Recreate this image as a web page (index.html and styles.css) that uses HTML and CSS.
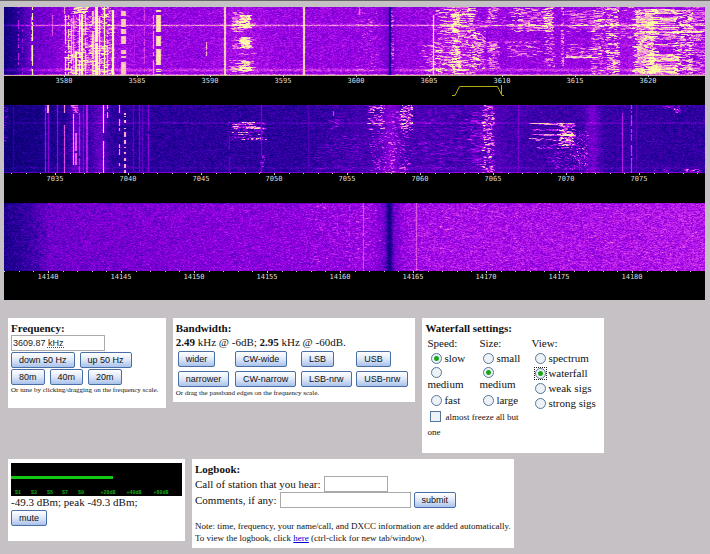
FILE: index.html
```html
<!DOCTYPE html>
<html lang="en">
<head>
<meta charset="utf-8">
<title>WebSDR</title>
<link rel="stylesheet" href="styles.css">
</head>
<body>
<main class="page">
  <section class="bands" aria-label="Waterfalls">
    <div class="band">
      <canvas class="waterfall" width="701" height="68" data-band="80m"></canvas>
      <svg class="scale" viewBox="0 0 701 30" data-start="3580" data-x="60" data-count="9">
        <path class="edge" d="M0 0.5H701"/>
        <path class="passband" d="M448 20.5H451L455.500 11.500H493.500L498 20.500H500M497.500 10V20"/>
      </svg>
    </div>
    <div class="band">
      <canvas class="waterfall" width="701" height="68" data-band="40m"></canvas>
      <svg class="scale" viewBox="0 0 701 30" data-start="7035" data-x="51" data-count="9"></svg>
    </div>
    <div class="band">
      <canvas class="waterfall" width="701" height="68" data-band="20m"></canvas>
      <svg class="scale" viewBox="0 0 701 29" data-start="14140" data-x="44" data-count="9"></svg>
    </div>
  </section>

  <div class="row row-controls">
    <section class="panel frequency">
      <h2><label for="freq">Frequency:</label></h2>
      <div class="freq-field"><input id="freq" class="field" type="text" value="3609.87 kHz" spellcheck="false"></div>
      <div class="buttons">
        <button type="button">down 50 Hz</button>
        <button type="button">up 50 Hz</button>
      </div>
      <div class="buttons">
        <button type="button">80m</button>
        <button type="button">40m</button>
        <button type="button">20m</button>
      </div>
      <p class="tiny">Or tune by clicking/dragging on the frequency scale.</p>
    </section>

    <section class="panel bandwidth">
      <h2>Bandwidth:</h2>
      <p><b>2.49</b> kHz @ -6dB; <b>2.95</b> kHz @ -60dB.</p>
      <div class="modes">
        <button type="button">wider</button>
        <button type="button">CW-wide</button>
        <button type="button">LSB</button>
        <button type="button">USB</button>
        <button type="button">narrower</button>
        <button type="button">CW-narrow</button>
        <button type="button">LSB-nrw</button>
        <button type="button">USB-nrw</button>
      </div>
      <p class="tiny">Or drag the passband edges on the frequency scale.</p>
    </section>

    <section class="panel settings">
      <h2>Waterfall settings:</h2>
      <div class="options">
        <div class="narrow-options">
          <div class="option-list" role="radiogroup" aria-label="Speed">
            <p>Speed:</p>
            <label><input type="radio" name="speed" checked>slow</label>
            <label class="wrapped"><input type="radio" name="speed"><span>medium</span></label>
            <label><input type="radio" name="speed">fast</label>
          </div>
          <div class="option-list" role="radiogroup" aria-label="Size">
            <p>Size:</p>
            <label><input type="radio" name="size">small</label>
            <label class="wrapped"><input type="radio" name="size" checked><span>medium</span></label>
            <label><input type="radio" name="size">large</label>
          </div>
          <label class="freeze"><input type="checkbox">almost freeze all but one</label>
        </div>
        <div class="option-list" role="radiogroup" aria-label="View">
          <p>View:</p>
          <label><input type="radio" name="view">spectrum</label>
          <label><span class="focused"><input type="radio" name="view" checked></span>waterfall</label>
          <label><input type="radio" name="view">weak sigs</label>
          <label><input type="radio" name="view">strong sigs</label>
        </div>
      </div>
    </section>
  </div>

  <div class="row row-log">
    <section class="panel meter">
      <svg class="smeter" viewBox="0 0 171 33">
        <rect width="171" height="33" fill="#000"/>
        <rect y="13" width="102" height="3" fill="#12c812"/>
        <g class="smeter-labels">
          <text x="7" y="31">S1</text><text x="23" y="31">S3</text><text x="39" y="31">S5</text>
          <text x="54" y="31">S7</text><text x="70" y="31">S9</text><text x="97" y="31">+20dB</text>
          <text x="123" y="31">+40dB</text><text x="150" y="31">+60dB</text>
        </g>
      </svg>
      <p>-49.3 dBm; peak -49.3 dBm;</p>
      <div class="buttons"><button type="button">mute</button></div>
    </section>

    <section class="panel logbook">
      <h2>Logbook:</h2>
      <div class="log-line"><label for="call">Call of station that you hear:</label><input id="call" class="field call" type="text"></div>
      <div class="log-line"><label for="comments">Comments, if any:</label><input id="comments" class="field comments" type="text"><button type="submit">submit</button></div>
      <p class="note">Note: time, frequency, your name/call, and DXCC information are added automatically.<br>To view the logbook, click <a href="#log">here</a> (ctrl-click for new tab/window).</p>
    </section>
  </div>
</main>
<script src="waterfall.js"></script>
</body>
</html>
```
FILE: styles.css
```css
* { box-sizing: border-box; }

body {
  margin: 0;
  background: #c5c1c5;
  color: #111;
  font: 11px/15px "Liberation Serif", serif;
}

.page {
  border-top: 1px solid #666;
  padding: 6px 5px 6px 4px;
}

h2, p { margin: 0; font-size: 11px; }

/* Waterfalls */
.bands { background: #000; }
.band, .waterfall, .scale { display: block; width: 100%; }
.scale { height: auto; }
.scale path { fill: none; stroke: #ccc; }
.scale .edge { stroke: #c8b49a; }
.scale .passband { stroke: #b4ac10; }
.scale text {
  fill: #ddd;
  font: 7px "DejaVu Sans Mono", monospace;
  text-anchor: middle;
}

/* Panels */
.row {
  display: grid;
  align-items: start;
  column-gap: 7px;
  padding-left: 4px;
}
.row-controls { grid-template-columns: 158fr 243fr 182fr 94fr; margin-top: 18px; }
.row-log { grid-template-columns: 177fr 322fr 184fr; margin-top: 6px; }
.panel { background: #fff; padding: 3px 3px 4px; white-space: nowrap; }
.panel h2 { line-height: 14px; }
.frequency { padding-bottom: 12px; }
.panel .tiny { font-size: 7px; line-height: 11px; }
.bandwidth .tiny { padding-top: 1px; }
.bandwidth { padding-bottom: 3px; }

button {
  height: 16px;
  padding: 0 7px;
  border: 1px solid #4a6fa5;
  border-radius: 2px;
  background: linear-gradient(#fff, #dfe8f8 50%, #a9c1ec);
  color: #111;
  font: 9px/14px "Liberation Sans", sans-serif;
}
.buttons { display: flex; gap: 5px; margin-top: 1px; }

.field {
  height: 16px;
  padding: 0 1px;
  border: 1px solid #aaa;
  background: #fff;
  color: #222;
  font: 9px/14px "Liberation Sans", sans-serif;
}
.freq-field { position: relative; display: flex; }
.freq-field .field { width: 94px; }
.freq-field::after {
  content: "";
  position: absolute;
  left: 36px;
  top: 12px;
  width: 17px;
  border-bottom: 1px dotted #f00;
}

.modes {
  display: grid;
  grid-template-columns: 57fr 66fr 55fr 56fr;
  justify-items: start;
  row-gap: 4px;
  padding: 1px 0 0 2px;
}

/* Settings */
.settings { padding-bottom: 14px; }
.options { display: flex; padding: 1px 2px 0; }
.narrow-options { display: grid; grid-template-columns: 52px 52px; }
.option-list label { display: flex; align-items: center; gap: 1px; padding-left: 3px; }
.option-list .wrapped { display: block; height: 26px; line-height: 11px; }
.wrapped input { display: block; }
.wrapped span { display: block; margin-left: -3px; }
.freeze {
  grid-column: 1 / 3;
  padding: 2px 3px 0 0;
  font-size: 9px;
  line-height: 14px;
  white-space: normal;
}
input[type="radio"], input[type="checkbox"] {
  appearance: none;
  width: 11px;
  height: 11px;
  margin: 1px;
  border: 1px solid #54789c;
  background: #eef2f6;
  vertical-align: middle;
}
input[type="radio"] { border-radius: 50%; }
input[type="radio"]:checked { background: radial-gradient(circle, #1ba51b 2px, #eef2f6 3px); }
input[type="checkbox"] { margin: 1px 4px 3px 3px; }
.focused { display: flex; outline: 1px dotted #222; outline-offset: -1px; }

/* Meter and logbook */
.meter { padding: 4px 3px 15px; }
.smeter { display: block; width: 100%; height: auto; }
.smeter-labels { fill: #14b014; font: bold 5px "Liberation Mono", monospace; text-anchor: middle; }
.meter p { line-height: 13px; }
.log-line { display: flex; align-items: center; gap: 3px; height: 16px; }
.call { width: 64px; }
.comments { width: 131px; }
.note { margin-top: 12px; font-size: 9px; line-height: 12px; }
a { color: #00d; }
```
FILE: waterfall.js
```js
var seed = 12345;
function rnd() {
  seed = (seed * 1664525 + 1013904223) >>> 0;
  return seed / 4294967296;
}

// Signal level (0..1) to colour.
var stops = [
  [0, 0, 0, 95], [0.2, 32, 0, 150], [0.35, 88, 0, 190], [0.5, 150, 0, 228],
  [0.65, 208, 50, 236], [0.8, 238, 150, 210], [0.92, 252, 232, 165], [1, 255, 252, 165]
];
function colour(v) {
  v = Math.max(0, Math.min(1, v));
  for (var i = 1; i < stops.length; i++) {
    if (v <= stops[i][0]) {
      var a = stops[i - 1], b = stops[i], t = (v - a[0]) / (b[0] - a[0]);
      return [a[1] + (b[1] - a[1]) * t, a[2] + (b[2] - a[2]) * t, a[3] + (b[3] - a[3]) * t];
    }
  }
}

// line:  x, width, level, y0, y1, dash share
// blob:  x0, x1, y0, y1, level gain, density, streak length
// glow:  centre, sigma, gain
var bands = {
  "80m": {
    noise: 0.15,
    base: [[0, 0.1], [12, 0.2], [25, 0.38], [60, 0.46], [120, 0.5], [701, 0.5]],
    glows: [[385, 5, -0.08], [241, 18, 0.04], [451, 16, 0.06], [640, 25, 0.05], [90, 22, 0.06]],
    rows: [[17, 0.1], [18, 0.3], [19, 0.06], [61, 0.06], [62, 0.13], [63, 0.16], [64, 0.07], [67, 0.22]],
    blobs: [
      [60, 112, 8, 67, 0.25, 0.5, 3], [67, 85, 0, 7, 0.55, 0.98, 5], [60, 112, 38, 67, 0.25, 0.35, 8],
      [97, 108, 0, 10, 0.35, 0.5, 3], [227, 240, 5, 25, 0.25, 0.6, 5], [225, 256, 10, 22, 0.22, 0.5, 8],
      [225, 253, 30, 42, 0.22, 0.5, 8], [225, 254, 53, 66, 0.25, 0.5, 8], [235, 248, 8, 21, 0.45, 0.9, 5],
      [235, 248, 30, 42, 0.45, 0.9, 5], [235, 248, 53, 64, 0.45, 0.9, 5], [227, 258, 46, 48, 0.25, 0.5, 8],
      [350, 374, 5, 66, 0.18, 0.13, 3], [386, 390, 3, 60, 0.3, 0.4, 2],
      [415, 442, 38, 67, 0.25, 0.35, 7], [430, 474, 0, 67, 0.3, 0.45, 6], [447, 457, 0, 67, 0.36, 0.65, 4],
      [452, 472, 0, 10, 0.3, 0.6, 6], [468, 482, 24, 62, 0.33, 0.65, 4], [483, 496, 0, 12, 0.35, 0.6, 4],
      [470, 505, 10, 22, 0.2, 0.4, 6], [483, 496, 34, 62, 0.3, 0.7, 5], [503, 550, 1, 25, 0.3, 0.6, 6],
      [540, 550, 0, 25, 0.35, 0.65, 3], [500, 540, 34, 50, 0.25, 0.35, 6], [540, 552, 25, 60, 0.28, 0.45, 3],
      [557, 560, 0, 62, 0.3, 0.5, 2], [559, 602, 3, 25, 0.24, 0.55, 9], [560, 602, 37, 52, 0.26, 0.45, 9],
      [561, 594, 49, 51, 0.4, 0.9, 12], [586, 602, 0, 67, 0.25, 0.45, 5], [601, 616, 0, 67, 0.36, 0.55, 4],
      [614, 634, 0, 32, 0.22, 0.35, 6], [628, 655, 2, 67, 0.36, 0.98, 4], [642, 678, 2, 7, 0.38, 0.9, 12],
      [642, 678, 10, 17, 0.38, 0.9, 14], [642, 678, 20, 23, 0.38, 0.9, 14], [642, 678, 25, 33, 0.32, 0.8, 14],
      [649, 676, 34, 46, 0.3, 0.35, 12], [642, 678, 47, 67, 0.36, 0.85, 12], [669, 690, 3, 67, 0.34, 0.65, 4],
      [682, 705, 0, 67, 0.25, 0.55, 6], [640, 705, 24, 26, 0.35, 0.9, 10]
    ],
    lines: [
      [14, 1, 0.7, 0, 60, 0.5], [18, 1, 0.6, 18, 68, 0.5], [28, 1, 1.1, 0, 68, 0.25], [27, 1, 0.75, 10, 68, 0.5],
      [48, 1, 0.78, 8, 29, 0.1], [60, 1, 0.9, 0, 7, 0], [61, 1, 1.1, 8, 68, 0.15], [64, 1, 1, 8, 68, 0.15],
      [67, 1, 0.95, 8, 68, 0.1], [71, 2, 1, 45, 68, 0], [69, 1, 0.85, 8, 68, 0], [75, 1, 1.1, 7, 68, 0.1],
      [77, 2, 1, 7, 68, 0.05], [81, 1, 0.95, 7, 68, 0.1], [88, 2, 0.9, 0, 68, 0.1], [91, 3, 1, 0, 68, 0.02],
      [95, 1, 1.1, 10, 68, 0], [100, 1, 1.15, 0, 68, 0], [103, 1, 0.95, 25, 68, 0.1], [108, 2, 1.05, 3, 68, 0],
      [117, 5, 0.88, 4, 68, 0.35], [130, 1, 0.6, 0, 68, 0.3], [140, 1, 0.72, 0, 68, 0.2], [149, 1, 0.92, 8, 68, 0.2],
      [152, 5, 0.92, 0, 68, 0.25], [202, 1, 0.95, 35, 49, 0.3], [220, 2, 0.92, 0, 68, 0], [299, 2, 0.95, 0, 68, 0],
      [355, 1, 0.8, 0, 8, 0], [385, 2, 0.14, 0, 68, 0], [429, 1, 1.05, 8, 68, 0]
    ]
  },
  "40m": {
    noise: 0.15,
    base: [[0, 0.1], [50, 0.18], [100, 0.22], [300, 0.23], [370, 0.31], [500, 0.29], [600, 0.26], [701, 0.23]],
    glows: [[95, 6, 0.15], [72, 6, 0.13], [386, 6, 0.14], [588, 5, 0.15], [485, 9, 0.06]],
    rows: [[0, 0.06], [17, 0.07], [18, 0.1], [62, 0.06], [63, 0.06], [67, 0.22]],
    blobs: [
      [0, 4, 2, 38, 0.3, 0.35, 2], [66, 75, 0, 8, 0.4, 0.8, 4], [222, 256, 17, 20, 0.5, 0.7, 6],
      [225, 263, 21, 24, 0.5, 0.75, 8], [227, 260, 27, 30, 0.5, 0.6, 5], [237, 263, 32, 35, 0.5, 0.55, 2],
      [223, 263, 17, 36, 0.25, 0.5, 2], [256, 261, 50, 68, 0.4, 0.4, 2], [325, 336, 10, 24, 0.22, 0.4, 4],
      [310, 360, 30, 65, 0.15, 0.2, 5], [364, 382, 0, 6, 0.5, 0.55, 3], [363, 382, 7, 25, 0.4, 0.38, 4],
      [396, 409, 0, 26, 0.5, 0.65, 2], [388, 398, 5, 25, 0.22, 0.35, 3], [364, 409, 26, 68, 0.3, 0.25, 2],
      [405, 480, 5, 65, 0.15, 0.2, 6], [464, 482, 10, 64, 0.2, 0.35, 8], [478, 491, 0, 68, 0.44, 0.5, 3],
      [524, 570, 18, 20, 0.45, 0.8, 8], [524, 565, 24, 26, 0.4, 0.6, 6], [526, 574, 29, 31, 0.5, 0.85, 10],
      [524, 570, 33, 36, 0.45, 0.7, 6], [532, 570, 38, 44, 0.4, 0.5, 4], [553, 572, 18, 41, 0.5, 0.65, 3],
      [566, 585, 26, 65, 0.38, 0.28, 1], [540, 585, 43, 65, 0.28, 0.2, 2], [653, 677, 1, 5, 0.3, 0.5, 2],
      [669, 678, 3, 8, 0.45, 0.5, 1], [679, 697, 64, 67, 0.5, 0.5, 2], [650, 665, 64, 67, 0.25, 0.5, 2]
    ],
    lines: [
      [9, 1, 0.3, 0, 68, 0], [41, 1, 0.65, 0, 68, 0], [43, 2, 0.92, 0, 8, 0], [44, 1, 0.55, 8, 68, 0],
      [53, 1, 0.6, 0, 68, 0], [60, 1, 1, 0, 8, 0], [60, 1, 0.85, 20, 68, 0], [69, 1, 1, 9, 60, 0],
      [71, 2, 0.78, 28, 60, 0.1], [75, 1, 0.7, 8, 68, 0.1], [79, 1, 0.55, 0, 68, 0], [82, 2, 0.62, 0, 68, 0],
      [99, 1, 1.15, 0, 28, 0], [99, 1, 1.05, 36, 68, 0], [103, 1, 1, 0, 13, 0.1], [115, 1, 1, 0, 68, 0.5],
      [120, 2, 0.92, 4, 68, 0.4], [129, 1, 0.4, 0, 68, 0], [135, 1, 0.48, 0, 68, 0], [138, 1, 0.42, 0, 68, 0],
      [144, 1, 0.55, 0, 68, 0.1], [225, 1, 0.42, 30, 68, 0.2], [257, 1, 0.48, 0, 68, 0.1], [304, 1, 0.37, 0, 68, 0],
      [329, 1, 0.8, 6, 11, 0], [514, 1, 0.48, 0, 68, 0], [618, 1, 0.68, 8, 68, 0], [627, 1, 0.75, 0, 68, 0.1],
      [632, 1, 0.38, 0, 68, 0]
    ]
  },
  "20m": {
    noise: 0.17,
    base: [[0, 0.16], [30, 0.29], [45, 0.4], [180, 0.45], [330, 0.49], [450, 0.54], [560, 0.54], [701, 0.57]],
    glows: [[385, 8, -0.12], [385, 2, -0.28]],
    rows: [[0, -0.06]],
    blobs: [[300, 380, 0, 68, 0.14, 0.08, 3], [395, 720, 0, 68, 0.1, 0.1, 2]],
    lines: [[333, 1, 0.64, 0, 68, 0.6], [345, 1, 0.7, 0, 68, 0.6], [359, 1, 0.74, 0, 68, 0.05], [412, 1, 0.76, 0, 68, 0.05]]
  }
};

function baseAt(points, x) {
  for (var i = 1; i < points.length; i++) {
    if (x <= points[i][0]) {
      var a = points[i - 1], b = points[i];
      return a[1] + (b[1] - a[1]) * (x - a[0]) / (b[0] - a[0]);
    }
  }
  return points[points.length - 1][1];
}

function paint(canvas) {
  var b = bands[canvas.dataset.band], w = canvas.width, h = canvas.height;
  var v = new Float32Array(w * h), x, y;
  for (x = 0; x < w; x++) {
    var level = baseAt(b.base, x);
    b.glows.forEach(function (g) {
      level += g[2] * Math.exp(-Math.pow((x - g[0]) / g[1], 2) / 2);
    });
    for (y = 0; y < h; y++) v[y * w + x] = level + (rnd() + rnd() - 1) * b.noise;
  }
  b.rows.forEach(function (r) {
    for (x = 0; x < w; x++) v[r[0] * w + x] += r[1] * (0.6 + 0.6 * rnd());
  });
  b.blobs.forEach(function (r) {
    var ragged = Math.min(8, (r[1] - r[0]) * 0.25);
    for (y = r[2]; y < Math.min(h, r[3]); y++) {
      var rowDensity = r[5] * (0.6 + 0.7 * rnd());
      var end = Math.min(w, r[1] - Math.floor(rnd() * ragged));
      x = r[0] + Math.floor(rnd() * ragged);
      while (x < end) {
        var n = 1 + Math.floor(rnd() * r[6]), on = rnd() < rowDensity, gain = r[4] * (0.4 + 0.8 * rnd());
        for (; n > 0 && x < end; n--, x++) if (on) v[y * w + x] += gain;
      }
    }
  });
  b.lines.forEach(function (l) {
    y = l[3];
    while (y < l[4]) {
      var n = 1 + Math.floor(rnd() * 4), on = rnd() >= l[5];
      for (; n > 0 && y < Math.min(h, l[4]); n--, y++) {
        if (on) for (x = l[0]; x < l[0] + l[1]; x++) v[y * w + x] = l[2] + (rnd() - 0.5) * 0.08;
      }
    }
  });
  var ctx = canvas.getContext("2d"), img = ctx.createImageData(w, h);
  for (var i = 0; i < v.length; i++) {
    // Neighbouring bins leak a little into each other.
    var left = i % w ? v[i - 1] : v[i], right = (i + 1) % w ? v[i + 1] : v[i];
    var c = colour(v[i] * 0.74 + left * 0.13 + right * 0.13);
    img.data[i * 4] = c[0];
    img.data[i * 4 + 1] = c[1];
    img.data[i * 4 + 2] = c[2];
    img.data[i * 4 + 3] = 255;
  }
  ctx.putImageData(img, 0, 0);
}

// One tick per kHz, a longer one and a label every 5 kHz.
function drawScale(svg) {
  var ns = "http://www.w3.org/2000/svg", start = +svg.dataset.start, x0 = +svg.dataset.x, step = 14.6;
  var d = "";
  for (var k = -5; k < 50; k++) {
    var x = Math.round(x0 + k * step) + 0.5;
    if (x > 0 && x < 701) d += "M" + x + " 0V" + (k % 5 ? 1 : 2);
  }
  var ticks = document.createElementNS(ns, "path");
  ticks.setAttribute("d", d);
  svg.appendChild(ticks);
  for (var i = 0; i < +svg.dataset.count; i++) {
    var t = document.createElementNS(ns, "text");
    t.setAttribute("x", x0 + i * 5 * step);
    t.setAttribute("y", 8);
    t.textContent = start + i * 5;
    svg.appendChild(t);
  }
}

document.querySelectorAll(".waterfall").forEach(paint);
document.querySelectorAll(".scale").forEach(drawScale);
```
